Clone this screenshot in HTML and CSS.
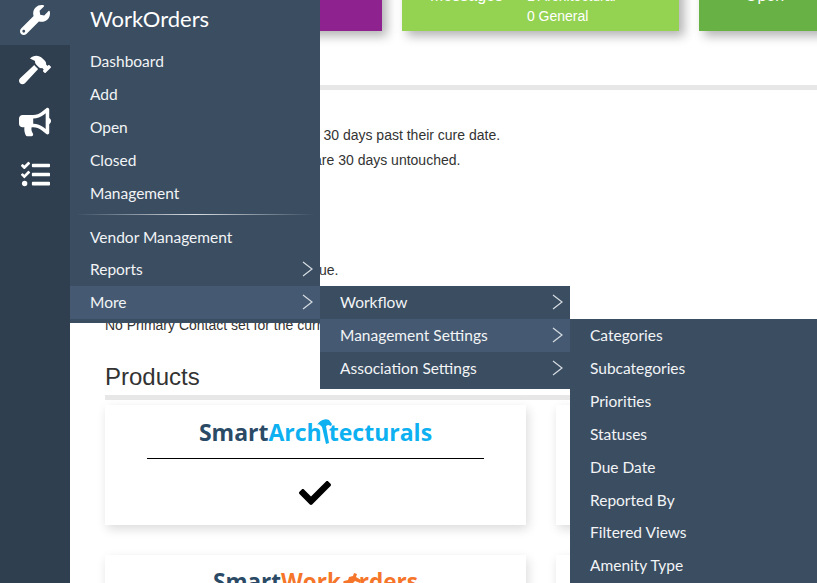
FILE: index.html
```html
<!DOCTYPE html>
<html lang="en">
  <head>
    <meta charset="UTF-8" />
    <meta name="viewport" content="width=device-width, initial-scale=1.0" />
    <title>WorkOrders</title>
    <link rel="stylesheet" href="styles.css">
  </head>
  <body>
    <svg class="icon-defs" width="0" height="0">
      <symbol id="chevron" viewBox="0 0 11 16">
        <path d="M1 1l9 7-9 7" fill="none" stroke="#d5dbe1" stroke-width="1.2" />
      </symbol>
    </svg>

    <nav class="rail">
      <a class="rail-item active">
        <svg class="wrench" viewBox="0 0 512 512"><path d="M507.73 109.1c-2.24-9.03-13.54-12.09-20.12-5.51l-74.36 74.36-67.88-11.31-11.31-67.88 74.36-74.36c6.62-6.62 3.43-17.9-5.66-20.16-47.38-11.74-99.55.91-136.58 37.93-39.64 39.64-50.55 97.1-34.05 147.2L18.74 402.76c-24.99 24.99-24.99 65.51 0 90.5 24.99 24.99 65.51 24.99 90.5 0l213.21-213.21c50.12 16.71 107.47 5.68 147.37-34.22 37.07-37.07 49.7-89.32 37.91-136.73zM64 472c-13.25 0-24-10.75-24-24 0-13.26 10.75-24 24-24s24 10.74 24 24c0 13.25-10.75 24-24 24z"/></svg>
      </a>
      <a class="rail-item">
        <svg viewBox="0 0 576 512"><path d="M571.31 193.94l-22.63-22.63c-6.25-6.25-16.38-6.25-22.63 0l-11.31 11.31-28.9-28.9c5.63-21.31.36-44.9-16.35-61.61l-45.25-45.25c-62.48-62.48-163.79-62.48-226.28 0l90.51 45.25v18.75c0 16.97 6.74 33.25 18.75 45.25l49.14 49.14c16.71 16.71 40.3 21.98 61.61 16.35l28.9 28.9-11.31 11.31c-6.25 6.25-6.25 16.38 0 22.63l22.63 22.63c6.25 6.25 16.38 6.25 22.63 0l90.51-90.51c6.23-6.24 6.23-16.37-.02-22.62zm-286.72-15.2c-3.7-3.7-6.84-7.79-9.85-11.95L19.64 404.96c-25.57 23.88-26.26 64.19-1.53 88.93s65.05 24.05 88.93-1.53l238.13-255.07c-3.96-2.91-7.9-5.87-11.44-9.41l-49.14-49.14z"/></svg>
      </a>
      <a class="rail-item">
        <svg viewBox="0 0 576 512"><path d="M576 240c0-23.63-12.95-44.04-32-55.12V32.01C544 23.26 537.02 0 512 0c-7.12 0-14.19 2.38-19.98 7.02l-85.03 68.03C364.28 109.19 310.66 128 256 128H64c-35.35 0-64 28.65-64 64v96c0 35.35 28.65 64 64 64h33.7c-1.39 10.48-2.18 21.14-2.18 32 0 39.77 9.26 77.35 25.56 110.94 5.19 10.69 16.52 17.06 28.4 17.06h74.28c26.05 0 41.69-29.84 25.9-50.56-16.4-21.52-26.15-48.36-26.15-77.44 0-11.11 1.62-21.79 4.41-32H256c54.66 0 108.28 18.81 150.98 52.95l85.03 68.03a32.023 32.023 0 0 0 19.98 7.02c24.92 0 32-22.78 32-32V295.13C563.05 284.04 576 263.63 576 240zm-96 141.42l-33.05-26.44C392.95 311.78 325.12 288 256 288v-96c69.12 0 136.95-23.78 190.95-66.98L480 98.58v282.84z"/></svg>
      </a>
      <a class="rail-item">
        <svg class="tasks" viewBox="0 0 512 512"><path d="M139.61 35.5a12 12 0 0 0-17 0L58.93 98.81l-22.7-22.12a12 12 0 0 0-17 0L3.53 92.41a12 12 0 0 0 0 17l47.59 47.4a12.78 12.78 0 0 0 17.61 0l15.59-15.62L156.52 69a12.09 12.09 0 0 0 .09-17zm0 159.19a12 12 0 0 0-17 0l-63.68 63.72-22.7-22.1a12 12 0 0 0-17 0L3.53 252a12 12 0 0 0 0 17L51 316.5a12.77 12.77 0 0 0 17.6 0l15.7-15.69 72.2-72.22a12 12 0 0 0 .09-16.9zM64 368c-26.49 0-48.59 21.5-48.59 48S37.53 464 64 464a48 48 0 0 0 0-96zm432 16H208a16 16 0 0 0-16 16v32a16 16 0 0 0 16 16h288a16 16 0 0 0 16-16v-32a16 16 0 0 0-16-16zm0-320H208a16 16 0 0 0-16 16v32a16 16 0 0 0 16 16h288a16 16 0 0 0 16-16V80a16 16 0 0 0-16-16zm0 160H208a16 16 0 0 0-16 16v32a16 16 0 0 0 16 16h288a16 16 0 0 0 16-16v-32a16 16 0 0 0-16-16z"/></svg>
      </a>
    </nav>

    <div class="menu menu-main">
      <div class="menu-title">WorkOrders</div>
      <a class="menu-item">Dashboard</a>
      <a class="menu-item">Add</a>
      <a class="menu-item">Open</a>
      <a class="menu-item">Closed</a>
      <a class="menu-item">Management</a>
      <div class="menu-divider"></div>
      <a class="menu-item">Vendor Management</a>
      <a class="menu-item">Reports<svg class="chevron"><use href="#chevron" /></svg></a>
      <a class="menu-item hover">More<svg class="chevron"><use href="#chevron" /></svg></a>
    </div>

    <div class="menu menu-more">
      <a class="menu-item">Workflow<svg class="chevron"><use href="#chevron" /></svg></a>
      <a class="menu-item hover">Management Settings<svg class="chevron"><use href="#chevron" /></svg></a>
      <a class="menu-item">Association Settings<svg class="chevron"><use href="#chevron" /></svg></a>
    </div>

    <div class="menu menu-settings">
      <a class="menu-item">Categories</a>
      <a class="menu-item">Subcategories</a>
      <a class="menu-item">Priorities</a>
      <a class="menu-item">Statuses</a>
      <a class="menu-item">Due Date</a>
      <a class="menu-item">Reported By</a>
      <a class="menu-item">Filtered Views</a>
      <a class="menu-item">Amenity Type</a>
    </div>

    <main class="content">
      <div class="tiles">
        <div class="tile purple"></div>
        <div class="tile green">
          <div class="tile-label">Messages</div>
          <div class="tile-counts">1 Architectural<br>0 General</div>
        </div>
        <div class="tile dark-green">
          <div class="tile-label">Open</div>
        </div>
      </div>

      <hr class="rule rule-top">

      <div class="notices">
        <p>0 Violations have lasted more than 30 days past their cure date.</p>
        <p>0 Work Orders in this association are 30 days untouched.</p>
        <p class="notice-due">0 Notices for this association are due.</p>
        <p class="notice-contact">No Primary Contact set for the current association.</p>
      </div>

      <h2 class="section-title">Products</h2>
      <hr class="rule">

      <div class="products">
        <div class="product">
          <div class="logo">
            <span class="logo-smart">Smart</span><span class="logo-arch">Arch<span class="logo-gap">i</span>tecturals</span>
            <svg class="logo-hammer" viewBox="0 0 16 26"><path d="M0 7C3 2 8 0 12 2l3 4-1 2-3-1-2 1 3 17-3 1-4-17-2-2C2 6 1 6 0 7z" fill="#0db0f0" /></svg>
          </div>
          <div class="product-line"></div>
          <svg class="check" viewBox="0 0 512 512"><path d="M173.898 439.404l-166.4-166.4c-9.997-9.997-9.997-26.206 0-36.204l36.203-36.204c9.997-9.998 26.207-9.998 36.204 0L192 312.69 432.095 72.596c9.997-9.997 26.207-9.997 36.204 0l36.203 36.204c9.997 9.997 9.997 26.206 0 36.204l-294.4 294.401c-9.998 9.997-26.207 9.997-36.204-.001z"/></svg>
        </div>
        <div class="product"></div>
        <div class="product">
          <div class="logo logo-small">
            <span class="logo-smart">Smart</span><span class="logo-work">Work<span class="logo-gap">O</span>rders</span>
            <svg class="logo-gear" viewBox="0 0 22 20"><path d="M3 9l4-1 1-3 4-1 1-3 3 1-1 3 5 3-1 3-5-2-2 2 3 8-3 1-3-8-4 2-3-4z" fill="#f5762a" /></svg>
          </div>
        </div>
        <div class="product"></div>
      </div>
    </main>
  </body>
</html>
```

FILE: styles.css
```css
html,
body {
  height: 100%;
  overflow: hidden;
}

body {
  font-family: "Liberation Sans", Arial, sans-serif;
  font-size: 14px;
  color: #333333;
  background-color: #ffffff;
  margin: 0;
}

.icon-defs {
  display: block;
}

/* side rail */
.rail {
  position: fixed;
  top: 0;
  left: 0;
  bottom: 0;
  z-index: 5;
  width: 70px;
  background-color: #2f3f4f;
}

.rail-item {
  display: flex;
  align-items: center;
  justify-content: center;
  height: 52px;
}

.rail-item.active {
  height: 45px;
  background-color: #3a4d61;
}

.rail-item svg {
  width: 32px;
  height: 32px;
  margin-top: -2px;
  fill: #ffffff;
}

.rail-item .wrench {
  width: 30px;
  height: 30px;
  margin-top: -6px;
}

.rail-item .tasks {
  width: 29px;
  height: 29px;
}

/* flyout menus */
.menu {
  position: fixed;
  z-index: 4;
  width: 250px;
  padding-bottom: 4px;
  background-color: #3a4d61;
  font-family: Lato, sans-serif;
  font-size: 15.5px;
  color: #f2f4f6;
}

.menu-main {
  top: 0;
  left: 70px;
}

.menu-more {
  top: 286px;
  left: 320px;
}

.menu-settings {
  top: 319px;
  left: 570px;
  width: 247px;
  bottom: 0;
}

.menu-title {
  height: 45px;
  padding: 0 20px 7px;
  box-sizing: border-box;
  line-height: 38px;
  font-size: 22px;
  color: #ffffff;
}

.menu-item {
  display: flex;
  align-items: center;
  justify-content: space-between;
  box-sizing: border-box;
  height: 32.85px;
  padding: 0 7px 0 20px;
}

.menu-item.hover {
  background-color: #455a72;
}

.menu-divider {
  height: 1px;
  margin: 5px;
  background: linear-gradient(to right, rgba(255, 255, 255, 0), #d8dde2 50%, rgba(255, 255, 255, 0));
}

.chevron {
  width: 11px;
  height: 16px;
}

/* page content */
.content {
  margin-left: 70px;
  padding-left: 35px;
}

.tiles {
  display: flex;
  gap: 20px;
  height: 31px;
  margin-right: -200px;
}

.tile {
  flex: 0 0 277px;
  height: 70px;
  margin-top: -39px;
  padding-top: 25px;
  box-sizing: border-box;
  color: #ffffff;
  box-shadow: 5px 5px 10px rgba(0, 0, 0, 0.3);
}

.tile.purple {
  background-color: #8e228f;
}

.tile.green {
  display: flex;
  gap: 24px;
  padding-left: 28px;
  background-color: #93d351;
}

.tile.dark-green {
  padding-left: 46px;
  background-color: #68b245;
}

.tile-label {
  font-size: 16px;
  line-height: 20px;
}

.tile-counts {
  line-height: 20px;
}

.rule {
  height: 5px;
  margin: 0;
  border: none;
  background-color: #e7e7e7;
}

.rule-top {
  margin-top: 54px;
}

.notices {
  padding-top: 33px;
}

.notices p {
  margin: 0;
  line-height: 25px;
  white-space: nowrap;
}

.notices .notice-due {
  margin-top: 85px;
}

.notices .notice-contact {
  margin-top: 30px;
}

.section-title {
  margin: 24px 0 3px;
  font-size: 24px;
  font-weight: normal;
  line-height: 30px;
}

.products {
  display: grid;
  grid-template-columns: repeat(2, 421px);
  grid-auto-rows: 120px;
  gap: 30px;
  margin-top: 5px;
}

.product {
  display: flex;
  flex-direction: column;
  align-items: center;
  background-color: #ffffff;
  box-shadow: 2px 4px 10px rgba(0, 0, 0, 0.14);
}

.logo {
  position: relative;
  margin-top: 11px;
  font-family: "Open Sans", sans-serif;
  font-size: 23px;
  font-weight: 700;
  line-height: 33px;
  white-space: nowrap;
}

.logo-small {
  margin-top: 10px;
  font-size: 22.5px;
}

.logo-smart {
  color: #2b4a66;
}

.logo-arch {
  color: #0db0f0;
}

.logo-work {
  color: #f5762a;
}

/* the hammer and gear stand in for a letter of the word */
.logo-gap {
  color: transparent;
}

.logo-hammer {
  position: absolute;
  top: 2px;
  left: 118px;
  width: 16px;
  height: 26px;
}

.logo-gear {
  position: absolute;
  top: 7px;
  left: 128px;
  width: 22px;
  height: 20px;
}

.product-line {
  width: 337px;
  height: 1px;
  margin-top: 9px;
  background-color: #000000;
}

.check {
  width: 32px;
  height: 32px;
  margin: 18px 2px 0 0;
}
```
